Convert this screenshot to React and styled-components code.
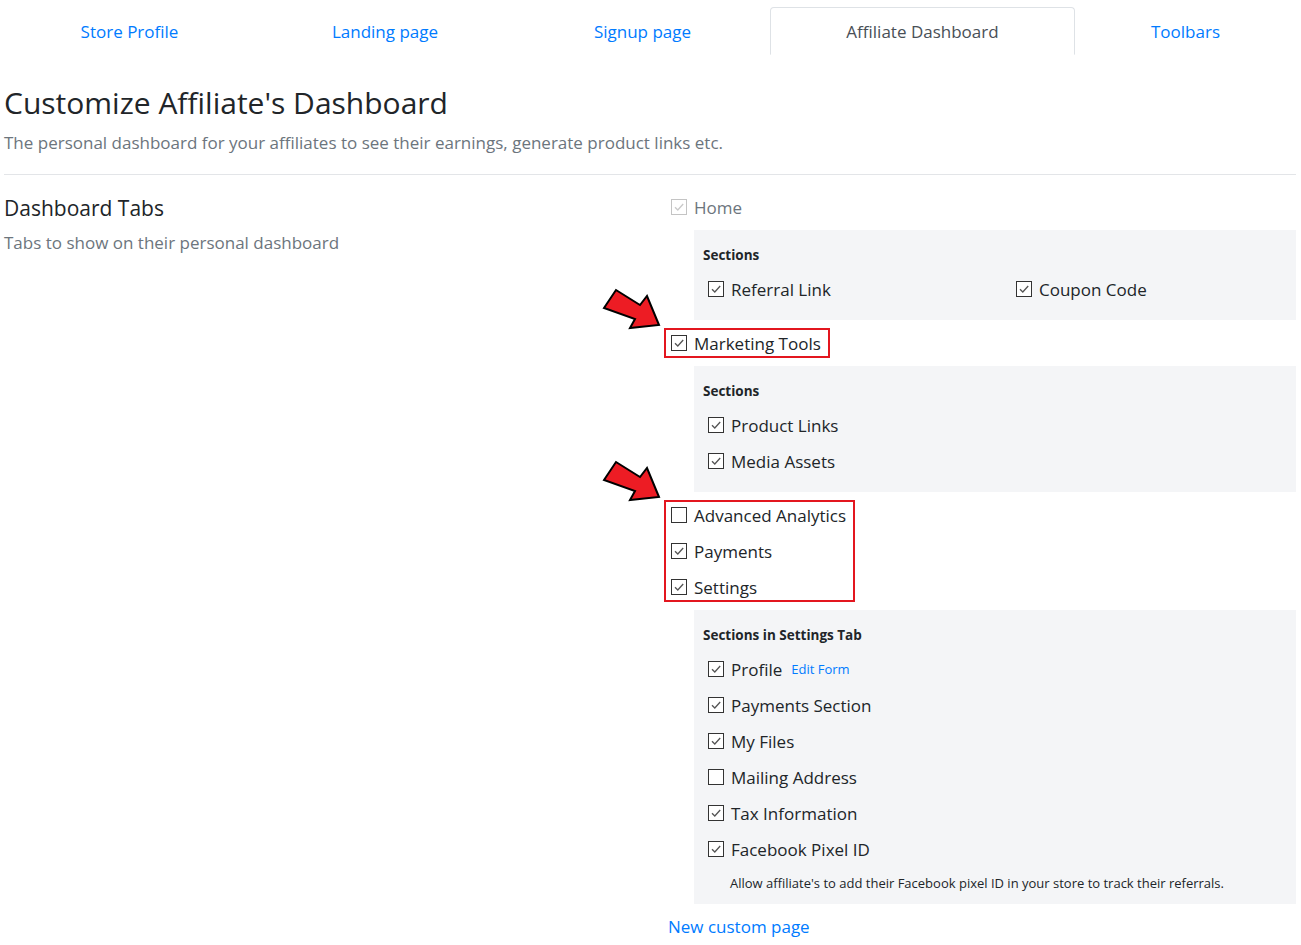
import React from 'react';
import styled, { createGlobalStyle } from 'styled-components';

const GlobalStyle = createGlobalStyle`
  * { box-sizing: border-box; }
  body {
    margin: 0;
    background: #fff;
    color: #212529;
    font-family: "Open Sans", "Noto Sans", sans-serif;
  }
`;

const Page = styled.div`
  padding: 7px 5px 20px 4px;
`;

const TabBar = styled.nav`
  display: grid;
  grid-template-columns: 251px 260px 255px 305px 221px;
  border-bottom: 1px solid #dee2e6;
`;

const Tab = styled.a`
  height: 48px;
  display: flex;
  align-items: center;
  justify-content: center;
  font-size: 17px;
  text-decoration: none;
  cursor: pointer;
  color: ${(p) => (p.$active ? '#495057' : '#007bff')};
  background: #fff;
  border: 1px solid ${(p) => (p.$active ? '#dee2e6' : 'transparent')};
  border-bottom-color: ${(p) => (p.$active ? '#fff' : 'transparent')};
  border-radius: 4px 4px 0 0;
  margin-bottom: -1px;
`;

const Title = styled.h1`
  margin: 30px 0 0;
  font-size: 30px;
  font-weight: 400;
  line-height: 36px;
`;

const Lead = styled.p`
  margin: 9px 0 0;
  font-size: 17px;
  line-height: 26px;
  color: #6c757d;
`;

const Rule = styled.hr`
  margin: 18px 0 0;
  border: 0;
  border-top: 1px solid #e3e5e8;
`;

const Section = styled.section`
  display: flex;
  margin-top: 17px;
`;

const Intro = styled.div`
  width: 660px;
  flex-shrink: 0;
  padding-top: 3px;
`;

const SectionTitle = styled.h2`
  margin: 0;
  font-size: 21px;
  font-weight: 400;
  line-height: 26px;
`;

const SectionText = styled.p`
  margin: 9px 0 0;
  font-size: 17px;
  line-height: 26px;
  color: #6c757d;
`;

const Options = styled.div`
  flex: 1;
  display: flex;
  flex-direction: column;
  align-items: flex-start;
  gap: 8px;
`;

const Highlight = styled.div`
  position: relative;
  display: flex;
  flex-direction: column;
  gap: 10px;
  padding: 0 7px 0 5px;
  border: 2px solid ${(p) => (p.$marked ? '#e3161f' : 'transparent')};
`;

const Arrow = styled.svg`
  position: absolute;
  left: -66px;
  top: -44px;
  width: 62px;
  height: 46px;
`;

const Row = styled.label`
  display: flex;
  align-items: center;
  gap: 7px;
  height: 26px;
  font-size: 17px;
  white-space: nowrap;
  color: ${(p) => (p.$disabled ? '#6c757d' : '#212529')};
`;

const Box = styled.span`
  width: 16px;
  height: 16px;
  flex-shrink: 0;
  border: 1px solid ${(p) => (p.$disabled ? '#c4c4c4' : '#333')};
  background: #fff;
  display: flex;
  align-items: center;
  justify-content: center;
`;

const Panel = styled.div`
  align-self: stretch;
  margin-left: 30px;
  background: #f4f5f7;
  padding: 15px 9px 18px;
`;

const PanelTitle = styled.div`
  font-size: 13.5px;
  font-weight: 700;
  line-height: 20px;
  margin-bottom: 11px;
`;

const PanelRows = styled.div`
  display: ${(p) => (p.$columns ? 'grid' : 'flex')};
  grid-template-columns: 298px 1fr;
  flex-direction: column;
  gap: 10px;
  padding-left: 5px;
`;

const SmallLink = styled.a`
  margin-left: 2px;
  font-size: 13px;
  color: #007bff;
  text-decoration: none;
`;

const Hint = styled.div`
  padding-left: 27px;
  margin: 12px 0 -6px;
  font-size: 13px;
  line-height: 18px;
  color: #212529;
`;

const CustomLink = styled.a`
  margin: 2px 0 0 4px;
  font-size: 17px;
  line-height: 26px;
  color: #007bff;
  text-decoration: none;
`;

const Check = ({ checked = true, disabled }) => (
  <Box $disabled={disabled}>
    {checked && (
      <svg width="12" height="12" viewBox="0 0 12 12">
        <path
          d="M2 6.2 L4.8 9 L10.2 3"
          fill="none"
          stroke={disabled ? '#c9c9c9' : '#555'}
          strokeWidth="1.3"
        />
      </svg>
    )}
  </Box>
);

const Option = ({ label, checked, disabled, children }) => (
  <Row $disabled={disabled}>
    <Check checked={checked} disabled={disabled} />
    {label}
    {children}
  </Row>
);

const RedArrow = () => (
  <Arrow viewBox="0 0 62 46">
    <polygon
      points="4,22 16,4 40,19 47,10 59,39 30,42 35,33"
      fill="#ed1c24"
      stroke="#000"
      strokeWidth="2"
      strokeLinejoin="miter"
    />
  </Arrow>
);

const tabs = ['Store Profile', 'Landing page', 'Signup page', 'Affiliate Dashboard', 'Toolbars'];

const settingsSections = [
  { label: 'Payments Section' },
  { label: 'My Files' },
  { label: 'Mailing Address', checked: false },
  { label: 'Tax Information' },
  { label: 'Facebook Pixel ID' },
];

export default function App() {
  return (
    <Page>
      <GlobalStyle />
      <TabBar>
        {tabs.map((t) => (
          <Tab key={t} $active={t === 'Affiliate Dashboard'}>
            {t}
          </Tab>
        ))}
      </TabBar>

      <Title>Customize Affiliate's Dashboard</Title>
      <Lead>The personal dashboard for your affiliates to see their earnings, generate product links etc.</Lead>
      <Rule />

      <Section>
        <Intro>
          <SectionTitle>Dashboard Tabs</SectionTitle>
          <SectionText>Tabs to show on their personal dashboard</SectionText>
        </Intro>

        <Options>
          <Highlight>
            <Option label="Home" disabled />
          </Highlight>
          <Panel>
            <PanelTitle>Sections</PanelTitle>
            <PanelRows $columns>
              <Option label="Referral Link" />
              <Option label="Coupon Code" />
            </PanelRows>
          </Panel>

          <Highlight $marked>
            <RedArrow />
            <Option label="Marketing Tools" />
          </Highlight>
          <Panel>
            <PanelTitle>Sections</PanelTitle>
            <PanelRows>
              <Option label="Product Links" />
              <Option label="Media Assets" />
            </PanelRows>
          </Panel>

          <Highlight $marked>
            <RedArrow />
            <Option label="Advanced Analytics" checked={false} />
            <Option label="Payments" />
            <Option label="Settings" />
          </Highlight>
          <Panel>
            <PanelTitle>Sections in Settings Tab</PanelTitle>
            <PanelRows>
              <Option label="Profile">
                <SmallLink>Edit Form</SmallLink>
              </Option>
              {settingsSections.map((s) => (
                <Option key={s.label} label={s.label} checked={s.checked !== false} />
              ))}
            </PanelRows>
            <Hint>Allow affiliate's to add their Facebook pixel ID in your store to track their referrals.</Hint>
          </Panel>

          <CustomLink>New custom page</CustomLink>
        </Options>
      </Section>
    </Page>
  );
}
